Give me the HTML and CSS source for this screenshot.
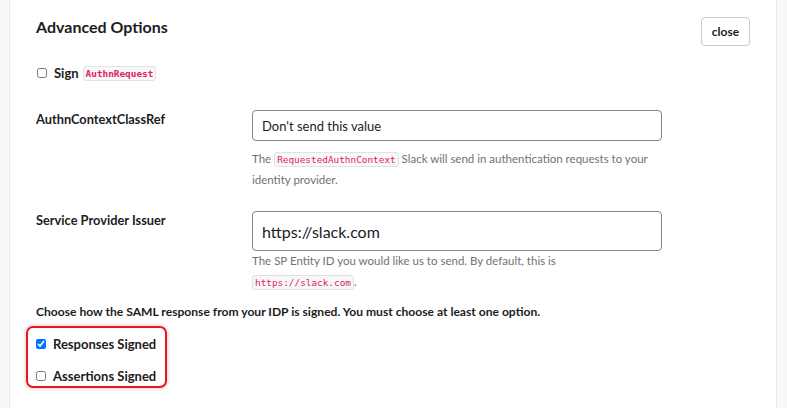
FILE: index.html
```html
<!DOCTYPE html>
<html lang="en">
<head>
  <meta charset="UTF-8">
  <title>Advanced Options</title>
  <link rel="stylesheet" href="styles.css">
</head>
<body>
  <div class="page">
    <div class="panel">
      <div class="panel-head">
        <h2>Advanced Options</h2>
        <button class="btn-close">close</button>
      </div>

      <label class="check sign-row">
        <input type="checkbox">
        <span>Sign</span> <code>AuthnRequest</code>
      </label>

      <div class="field first">
        <div class="field-label">AuthnContextClassRef</div>
        <div class="field-body">
          <div class="select">Don't send this value</div>
          <p class="help">The <code>RequestedAuthnContext</code> Slack will send in authentication requests to your identity provider.</p>
        </div>
      </div>

      <div class="field second">
        <div class="field-label">Service Provider Issuer</div>
        <div class="field-body">
          <input class="text-input" type="text" value="https://slack.com">
          <p class="help tight">The SP Entity ID you would like us to send. By default, this is <code>https://slack.com</code>.</p>
        </div>
      </div>

      <p class="choose">Choose how the SAML response from your IDP is signed. You must choose at least one option.</p>

      <div class="highlight">
        <label class="check"><input type="checkbox" checked><span>Responses Signed</span></label>
        <label class="check"><input type="checkbox"><span>Assertions Signed</span></label>
      </div>
    </div>
  </div>
</body>
</html>
```

FILE: styles.css
```css
body {
  margin: 0;
  font-family: Lato, "Open Sans", sans-serif;
  color: #1d1c1d;
  background-color: #f8f8f8;
}
.page {
  padding: 0 10px 0 9px;
}
.panel {
  background-color: #fff;
  border-left: 1px solid #e8e8e8;
  border-right: 1px solid #e8e8e8;
  width: 768px;
  height: 408px;
  box-sizing: border-box;
  padding: 0 26px;
}
.panel-head {
  display: flex;
  justify-content: space-between;
  align-items: flex-start;
  padding-top: 16px;
}
.panel-head h2 {
  margin: 0;
  font-size: 16px;
  font-weight: 700;
  line-height: 22px;
}
.btn-close {
  margin-top: 1px;
  width: 49px;
  height: 29px;
  background: #fff;
  border: 1px solid #c8c8c8;
  border-radius: 4px;
  font-family: inherit;
  font-weight: 700;
  font-size: 12px;
  color: #1d1c1d;
  padding: 0;
}
.check {
  display: flex;
  align-items: center;
  font-weight: 700;
  font-size: 13px;
}
.check input {
  margin: 0 7px 0 1px;
  width: 10px;
  height: 10px;
}
.sign-row {
  margin-top: 19px;
}
.sign-row span {
  margin-right: 4px;
}
code {
  font-family: "DejaVu Sans Mono", monospace;
  font-size: 9.4px;
  color: #e01e5a;
  background: #f8f8f8;
  border: 1px solid #e2e2e2;
  border-radius: 3px;
  padding: 1px 2px;
}
.field {
  display: flex;
}
.field.first {
  margin-top: 29px;
}
.field.second {
  margin-top: 21px;
}
.field-label {
  width: 216px;
  font-weight: 700;
  font-size: 12.8px;
  padding-top: 1px;
}
.field-body {
  width: 410px;
}
.select, .text-input {
  box-sizing: border-box;
  width: 410px;
  border: 1px solid #868686;
  border-radius: 4px;
  font-family: inherit;
  color: #1d1c1d;
}
.select {
  height: 31px;
  padding: 5px 9px;
  font-size: 13px;
  line-height: 20px;
}
.text-input {
  display: block;
  height: 40px;
  padding: 0 9px;
  font-size: 16px;
}
.help {
  margin: 8px 0 0;
  font-size: 11.5px;
  line-height: 20px;
  color: #717274;
}
.help.tight {
  margin-top: -1px;
  line-height: 21px;
}
.choose {
  margin: 11px 0 0;
  font-weight: 700;
  font-size: 12.1px;
}
.highlight {
  margin: 7px 0 0 -10px;
  width: 141px;
  height: 62px;
  box-sizing: border-box;
  border: 2px solid #f0141e;
  border-radius: 7px;
  box-shadow: 0 0 4px rgba(0, 0, 0, 0.25);
  padding: 7px 0 0 7px;
  display: flex;
  flex-direction: column;
  gap: 15px;
}
.highlight .check {
  height: 17px;
}
```
